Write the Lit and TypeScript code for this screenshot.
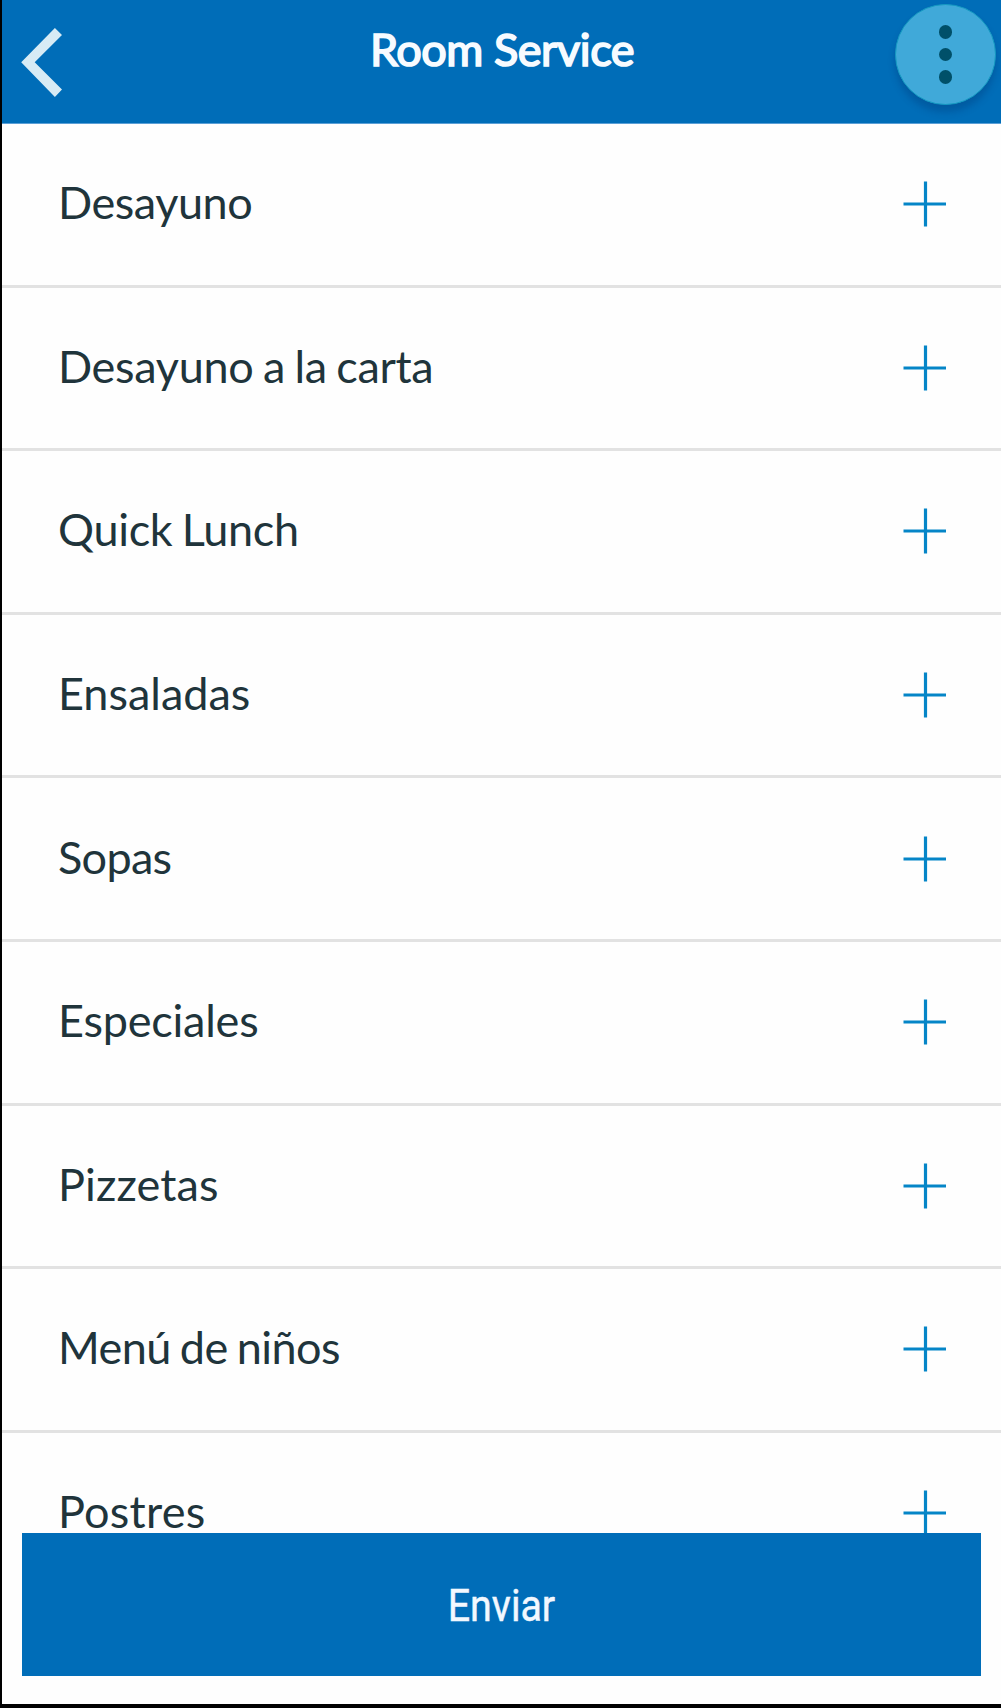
import { LitElement, html, css } from "lit";
import { customElement, property } from "lit/decorators.js";
import { styleMap } from "lit/directives/style-map.js";

interface MenuItem {
  label: string;
  tracking: number;
  wordGap?: number;
}

@customElement("menu-row")
class MenuRow extends LitElement {
  @property({ attribute: false }) item: MenuItem = { label: "", tracking: 0 };

  static styles = css`
    :host {
      display: flex;
      flex: none;
      box-sizing: border-box;
      height: 163.6px;
      padding: 0 52.5px 0 56px;
      border-bottom: 3px solid #e2e2e2;
      align-items: center;
      justify-content: space-between;
      background: #fefefe;
    }
    :host(:last-of-type) {
      border-bottom-color: transparent;
    }
    .label {
      padding-bottom: 4px;
      font: 400 45px/54px Lato, sans-serif;
      color: #20343b;
      white-space: nowrap;
    }
    .plus {
      flex: none;
      display: block;
      width: 48px;
      height: 48px;
    }
  `;

  render() {
    const spacing = {
      letterSpacing: `${this.item.tracking}px`,
      wordSpacing: `${this.item.wordGap ?? 0}px`,
    };
    return html`
      <span class="label" style=${styleMap(spacing)}>${this.item.label}</span>
      <svg class="plus" viewBox="0 0 48 48" fill="none" stroke="#0585c7" stroke-width="3.2">
        <path d="M2.5 24H45M24.5 1.5V46.5" />
      </svg>
    `;
  }
}

@customElement("app-root")
class AppRoot extends LitElement {
  private items: MenuItem[] = [
    { label: "Desayuno", tracking: -0.45 },
    { label: "Desayuno a la carta", tracking: -0.3, wordGap: -1.8 },
    { label: "Quick Lunch", tracking: -0.3, wordGap: -2 },
    { label: "Ensaladas", tracking: 0 },
    { label: "Sopas", tracking: -0.7 },
    { label: "Especiales", tracking: -0.22 },
    { label: "Pizzetas", tracking: 0.15 },
    { label: "Menú de niños", tracking: -0.55, wordGap: -2 },
    { label: "Postres", tracking: 0.25 },
  ];

  static styles = css`
    :host {
      display: block;
    }
    .screen {
      position: relative;
      box-sizing: border-box;
      display: flex;
      flex-direction: column;
      height: 1708px;
      border-left: 2px solid #000;
      border-bottom: 4px solid #000;
      background: #fefefe;
      overflow: hidden;
    }
    .header {
      flex: none;
      box-sizing: border-box;
      display: grid;
      grid-template-columns: 110px 1fr 110px;
      height: 124px;
      background: #006db8;
      border-bottom: 1px solid #5b9fd6;
    }
    .back {
      display: block;
      width: 110px;
      height: 123px;
    }
    .title {
      margin: 0;
      padding: 22px 0 0 1px;
      text-align: center;
      font: 400 45px/54px Lato, sans-serif;
      letter-spacing: -0.45px;
      color: #f7fbff;
      -webkit-text-stroke: 1.7px #f7fbff;
      white-space: nowrap;
    }
    .more {
      box-sizing: border-box;
      width: 101px;
      height: 101px;
      margin: 3.5px 0 0 4px;
      padding-top: 1px;
      border-radius: 50%;
      background: #40a9d9;
      border: 1px solid #149ac2;
      box-shadow: 0 7px 7px rgba(0, 50, 110, 0.3);
      display: flex;
      flex-direction: column;
      align-items: center;
      justify-content: center;
      gap: 9.3px;
    }
    .dot {
      width: 13.2px;
      height: 13.2px;
      border-radius: 50%;
      background: #005069;
    }
    .list {
      flex: 1;
      min-height: 0;
      display: flex;
      flex-direction: column;
      overflow: hidden;
    }
    .send {
      position: absolute;
      left: 20px;
      right: 20px;
      bottom: 28px;
      height: 143.5px;
      padding: 4px 0 0;
      border: 0;
      background: #006db8;
      color: #f2f8ff;
      font: 400 45px/54px Roboto, sans-serif;
      -webkit-text-stroke: 0.5px #f2f8ff;
    }
    .send-text {
      display: inline-block;
      transform: scaleX(0.875);
    }
  `;

  render() {
    return html`
      <div class="screen">
        <header class="header">
          <svg class="back" viewBox="0 0 110 123">
            <path d="M19.2 62.3 52.9 28 60 35 32.7 62.3 60 89.5 52.9 97Z" fill="#d7ebf5" />
          </svg>
          <h1 class="title">Room Service</h1>
          <div class="more">
            <span class="dot"></span><span class="dot"></span><span class="dot"></span>
          </div>
        </header>
        <main class="list">
          ${this.items.map((item) => html`<menu-row .item=${item}></menu-row>`)}
        </main>
        <button class="send"><span class="send-text">Enviar</span></button>
      </div>
    `;
  }
}
